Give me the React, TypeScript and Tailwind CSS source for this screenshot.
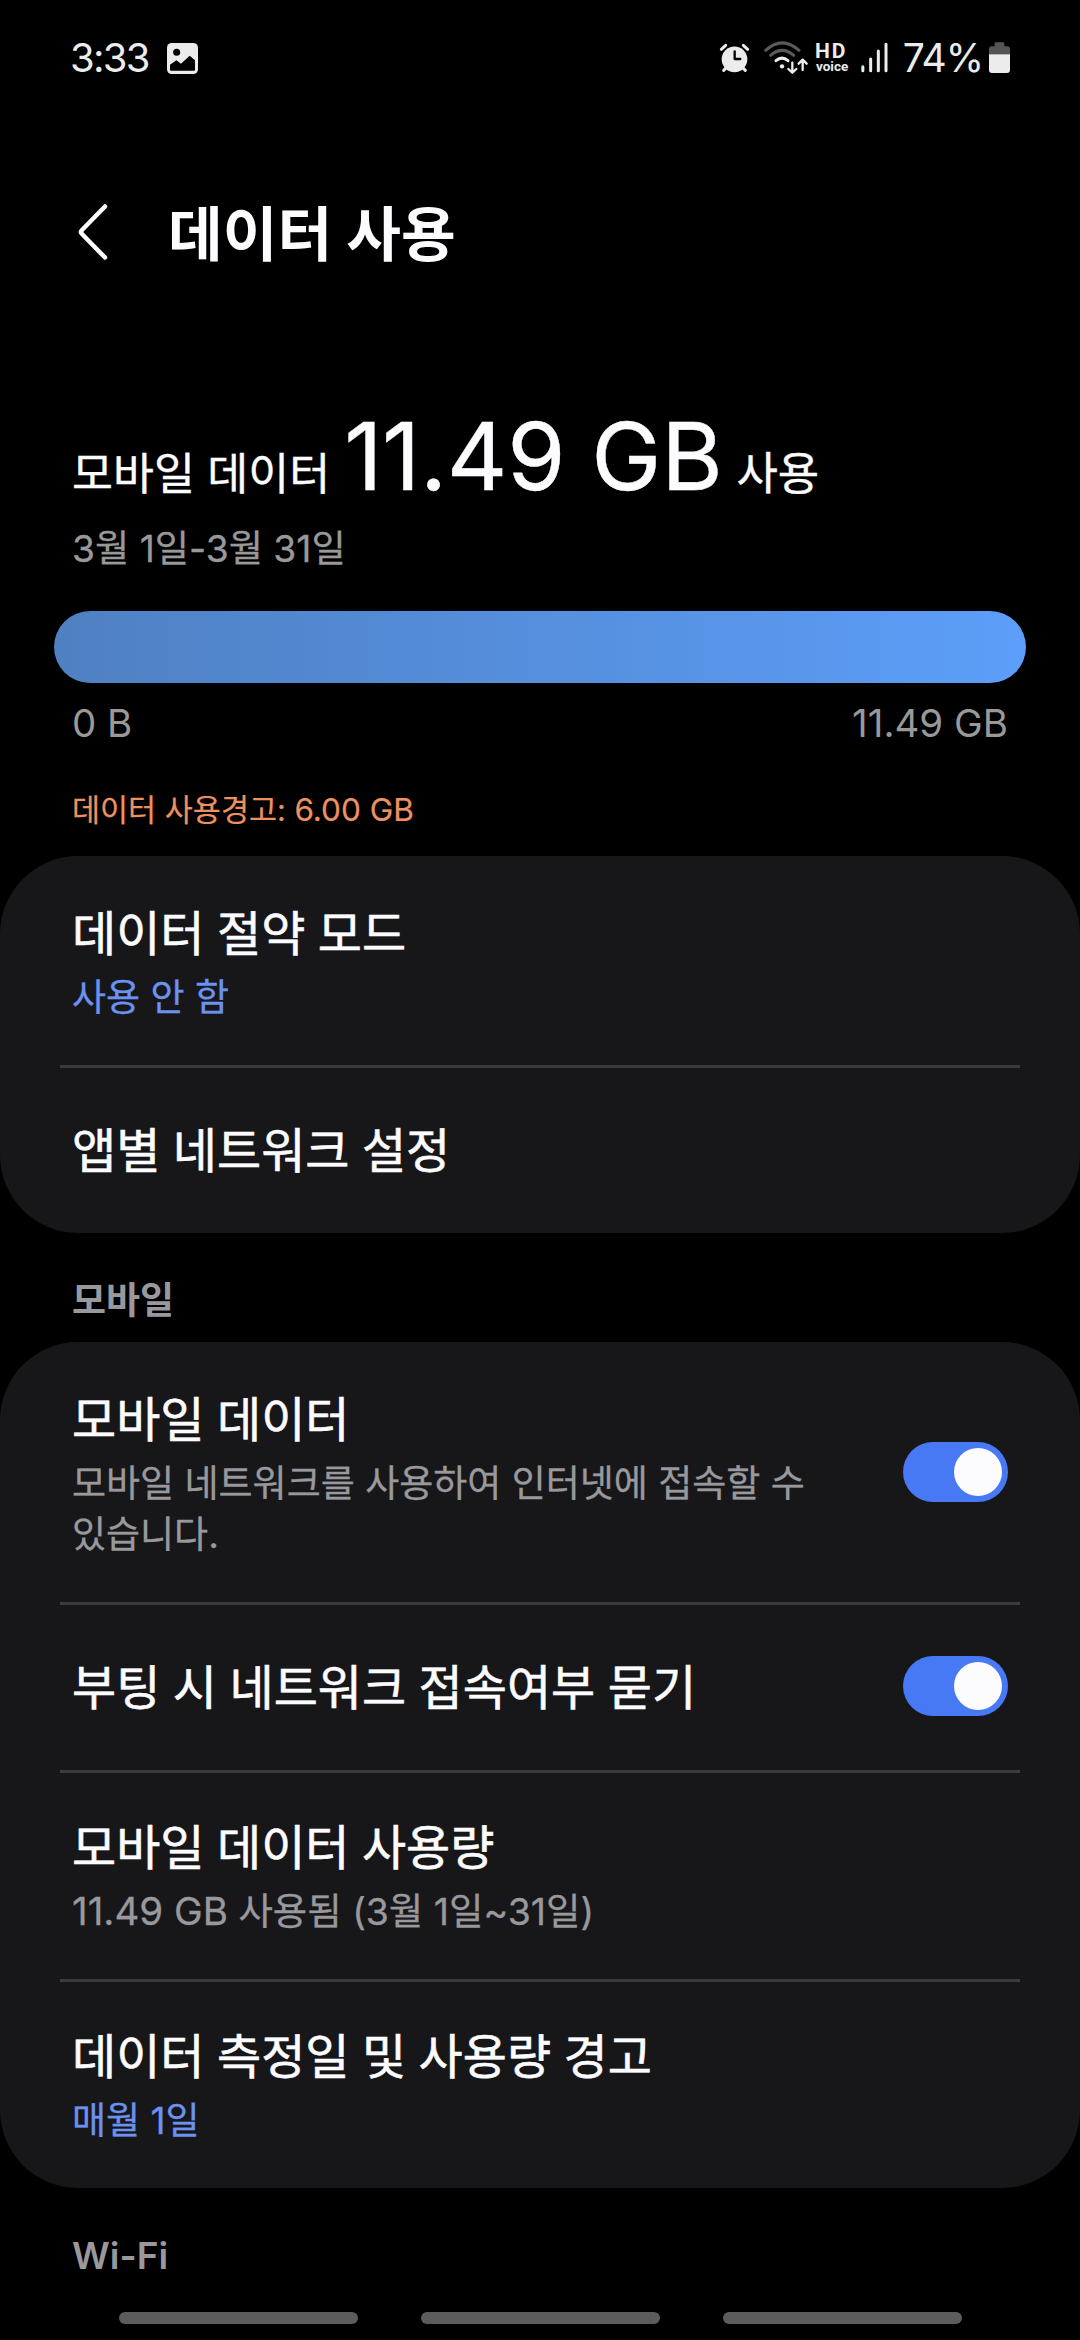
import React, { useState } from "react";

interface SettingItem {
  id: string;
  title: string;
  summary?: React.ReactNode;
  accent?: boolean;
  toggle?: boolean;
}

const GENERAL_ITEMS: SettingItem[] = [
  { id: "saver", title: "데이터 절약 모드", summary: "사용 안 함", accent: true },
  { id: "per-app", title: "앱별 네트워크 설정" },
];

const MOBILE_ITEMS: SettingItem[] = [
  {
    id: "mobile-data",
    title: "모바일 데이터",
    summary: "모바일 네트워크를 사용하여 인터넷에 접속할 수 있습니다.",
    toggle: true,
  },
  { id: "boot", title: "부팅 시 네트워크 접속여부 묻기", toggle: true },
  {
    id: "usage",
    title: "모바일 데이터 사용량",
    summary: (
      <>
        <span className="text-[38.500px]">11.49 GB</span>
        <span className="text-[37.400px]"> 사용됨 (3월 1일~31일)</span>
      </>
    ),
  },
  { id: "cycle", title: "데이터 측정일 및 사용량 경고", summary: "매월 1일", accent: true },
];

function StatusBar() {
  return (
    <div className="flex h-[116px] shrink-0 items-center pl-[70px] pr-[69px] text-[#ececec]">
      <span className="w-[97px] text-[40px] leading-none tracking-[-1.700px]">3:33</span>
      <svg viewBox="351 69 93 93" className="h-[31px] w-[31px] shrink-0">
        <rect x="351" y="69" width="93" height="93" rx="14" fill="#ececec" />
        <circle cx="380" cy="97" r="10.5" fill="#000" />
        <path d="M360 149V134L379 121L393 131L419 107L435 121V149Q435 152 432 152H363Q360 152 360 149Z" fill="#000" />
      </svg>

      {/* Alarm */}
      <svg viewBox="57 54 93 120" className="ml-[521px] h-[40px] w-[31px] shrink-0" fill="none" strokeLinecap="round">
        <circle cx="103.500" cy="118" r="38.500" fill="#ececec" />
        <path d="M64 88L77 76M143 88L130 76M71 151L80 142M136 151L127 142" stroke="#ececec" strokeWidth="9" />
        <path d="M104 94V117H121" stroke="#000" strokeWidth="7" strokeLinejoin="round" />
      </svg>

      {/* Wi-Fi with traffic arrows */}
      <svg viewBox="186 54 141 120" className="ml-[12px] h-[40px] w-[47px] shrink-0" fill="none" strokeLinecap="round" strokeLinejoin="round">
        <path d="M197 91Q246 46 297 91M212 106Q246 76 281 106" stroke="#5a5a5a" strokeWidth="9" />
        <path d="M228 122Q246 107 264 122" stroke="#ececec" strokeWidth="9" />
        <circle cx="246" cy="139" r="6.500" fill="#ececec" />
        <path d="M277 128V157M265 147L277 158L289 147M308 150V121M296 131L308 119L320 131" stroke="#ececec" strokeWidth="7" />
      </svg>

      <div className="ml-[6px] flex w-[36px] shrink-0 flex-col font-[Roboto] font-bold">
        <span className="text-[21px] leading-[16px] tracking-[2px]">HD</span>
        <span className="pl-px text-[13.500px] leading-[14px]">voice</span>
      </div>

      {/* Signal */}
      <svg viewBox="480 54 87 120" className="ml-[9px] h-[40px] w-[29px] shrink-0" stroke="#ececec" strokeWidth="9" strokeLinecap="round">
        <path d="M488.500 140V152M512 117V152M535 93V152M558 73V152" />
      </svg>

      <span className="ml-auto pb-[2px] text-[39px] leading-none tracking-[-1px]">74%</span>
      <svg viewBox="864 54 69 120" className="ml-[5px] h-[40px] w-[23px] shrink-0">
        <path d="M867 103V87Q867 79 875 79H884V71Q884 67 888 67H909Q913 67 913 71V79H922Q930 79 930 87V103Z" fill="#555" />
        <path d="M867 103H930V150Q930 159 921 159H876Q867 159 867 150Z" fill="#ececec" />
      </svg>
    </div>
  );
}

function Toggle() {
  const [on, setOn] = useState(true);

  return (
    <button
      role="switch"
      aria-checked={on}
      onClick={() => setOn(!on)}
      className={`mb-[3px] flex h-[60px] w-[105px] shrink-0 items-center rounded-full px-[6px] ${
        on ? "justify-end bg-[#4879f5]" : "justify-start bg-[#555558]"
      }`}
    >
      <span className="h-12 w-12 rounded-full bg-[#fcfcff]" />
    </button>
  );
}

function SettingRow({ item }: { item: SettingItem }) {
  return (
    <div
      className={`flex items-center justify-between px-[12px] ${
        item.summary ? "pb-[42px] pt-[42px]" : "box-content h-[165px]"
      }`}
    >
      <div className="w-[770px]">
        <p className="text-[48px] leading-[66px] text-[#fcfcff] [-webkit-text-stroke:0.6px] [word-spacing:-1px]">
          {item.title}
        </p>
        {item.summary && (
          <p
            className={`mt-[5px] w-[740px] break-keep text-[37px] leading-[51px] [-webkit-text-stroke:0.3px] ${
              item.accent ? "text-[#6b92ef]" : "text-[#99999d]"
            }`}
          >
            {item.summary}
          </p>
        )}
      </div>
      {item.toggle && <Toggle />}
    </div>
  );
}

function Card({ items }: { items: SettingItem[] }) {
  return (
    <section className="shrink-0 divide-y-[3px] divide-[#3b3b3d] rounded-[78px] bg-[#17171a] px-[60px] pt-[3px]">
      {items.map((item) => (
        <SettingRow key={item.id} item={item} />
      ))}
    </section>
  );
}

function SectionLabel({ children }: { children: React.ReactNode }) {
  return (
    <h2 className="h-[109px] shrink-0 pl-[72px] pt-[42px] text-[37px] font-semibold leading-[52px] text-[#99999d]">
      {children}
    </h2>
  );
}

export default function App() {
  return (
    <div className="flex h-[2340px] w-[1080px] flex-col overflow-hidden bg-black font-['Inter','Noto_Sans_CJK_KR',sans-serif] text-[#fcfcff]">
      <StatusBar />

      <header className="flex h-[232px] shrink-0 items-center pl-[76px]">
        <svg viewBox="0 0 34 60" className="h-[60px] w-[34px]" fill="none" stroke="#fcfcff" strokeWidth="4.500" strokeLinecap="round" strokeLinejoin="round">
          <path d="M29 4.500L6 28Q4 30 6 32L29 55.500" />
        </svg>
        <h1 className="ml-[58px] pt-[5px] text-[59.500px] font-bold leading-none">데이터 사용</h1>
      </header>

      {/* Usage summary */}
      <div className="flex shrink-0 items-baseline whitespace-pre pl-[72px] pt-[61px] leading-none">
        <span className="text-[44.500px] [-webkit-text-stroke:0.4px]">모바일 데이터</span>
        <span className="ml-[14px] text-[94px] tracking-[-0.300px] [-webkit-text-stroke:0.4px]">11.49 GB</span>
        <span className="ml-[14px] text-[45px] [-webkit-text-stroke:0.4px]">사용</span>
      </div>
      <p className="mt-[20px] shrink-0 pl-[72px] text-[37.200px] leading-[52px] text-[#999] [-webkit-text-stroke:0.3px]">
        3월 1일-3월 31일
      </p>

      <div className="mx-[54px] mt-[36px] h-[72px] shrink-0 rounded-full bg-linear-to-r from-[#4f80c2] to-[#5c9ef9]" />
      <div className="mt-[14px] flex shrink-0 justify-between pl-[72px] pr-[72px] text-[38.500px] leading-[52px] text-[#999]">
        <span>0 B</span>
        <span>11.49 GB</span>
      </div>
      <p className="mb-[24px] mt-[39px] shrink-0 pl-[72px] text-[30.500px] leading-[44px] text-[#ee9160] [-webkit-text-stroke:0.2px]">
        데이터 사용경고: <span className="text-[31.500px]">6.00 GB</span>
      </p>

      <Card items={GENERAL_ITEMS} />
      <SectionLabel>모바일</SectionLabel>
      <Card items={MOBILE_ITEMS} />
      <SectionLabel>Wi-Fi</SectionLabel>

      {/* Gesture hints */}
      <div className="mt-[15px] flex shrink-0 justify-center gap-[63px]">
        <span className="h-[12px] w-[239px] rounded-full bg-[#5c5c5c]" />
        <span className="h-[12px] w-[239px] rounded-full bg-[#5c5c5c]" />
        <span className="h-[12px] w-[239px] rounded-full bg-[#5c5c5c]" />
      </div>
    </div>
  );
}
